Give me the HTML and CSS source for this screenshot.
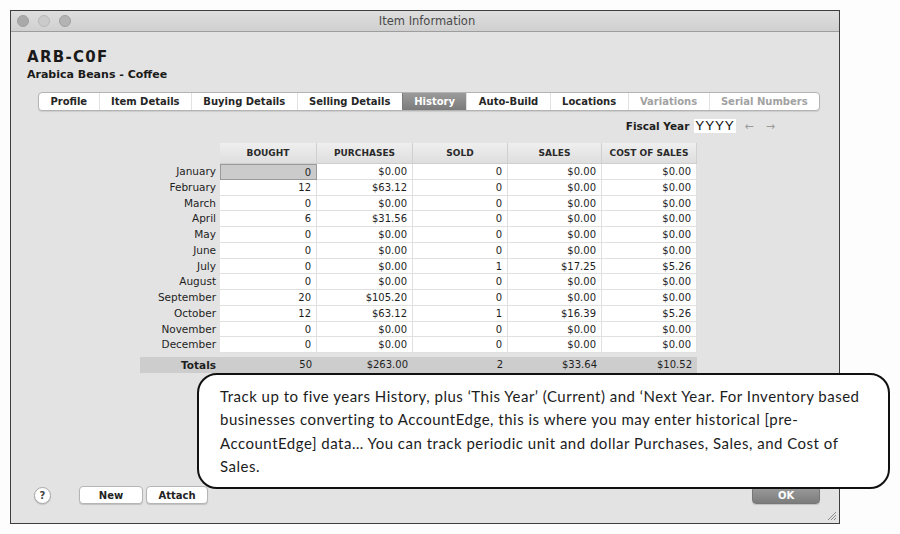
FILE: index.html
```html
<!DOCTYPE html>
<html lang="en">
<head>
<meta charset="UTF-8" />
<meta name="viewport" content="width=device-width, initial-scale=1" />
<title>Item Information</title>
<link rel="stylesheet" href="styles.css">
</head>
<body>

<div class="window">
  <div class="titlebar">
    <div class="lights">
      <span class="light l1"></span>
      <span class="light l2"></span>
      <span class="light l3"></span>
    </div>
    <div class="title">Item Information</div>
  </div>

  <div class="content">
    <h1 class="item-code">ARB-C0F</h1>
    <p class="item-name">Arabica Beans - Coffee</p>

    <nav class="tabs">
      <span class="tab">Profile</span>
      <span class="tab">Item Details</span>
      <span class="tab">Buying Details</span>
      <span class="tab">Selling Details</span>
      <span class="tab active">History</span>
      <span class="tab">Auto-Build</span>
      <span class="tab">Locations</span>
      <span class="tab disabled">Variations</span>
      <span class="tab disabled">Serial Numbers</span>
    </nav>

    <div class="fiscal">
      <span class="fiscal-label">Fiscal Year</span>
      <span class="fiscal-year">YYYY</span>
      <span class="arrows"><span>&larr;</span><span>&rarr;</span></span>
    </div>

    <div class="history">
      <div class="grid">
        <div></div>
        <div class="hd">BOUGHT</div>
        <div class="hd">PURCHASES</div>
        <div class="hd">SOLD</div>
        <div class="hd">SALES</div>
        <div class="hd">COST OF SALES</div>

        <div class="lbl">January</div><div class="cell selected">0</div><div class="cell">$0.00</div><div class="cell">0</div><div class="cell">$0.00</div><div class="cell">$0.00</div>
        <div class="lbl">February</div><div class="cell">12</div><div class="cell">$63.12</div><div class="cell">0</div><div class="cell">$0.00</div><div class="cell">$0.00</div>
        <div class="lbl">March</div><div class="cell">0</div><div class="cell">$0.00</div><div class="cell">0</div><div class="cell">$0.00</div><div class="cell">$0.00</div>
        <div class="lbl">April</div><div class="cell">6</div><div class="cell">$31.56</div><div class="cell">0</div><div class="cell">$0.00</div><div class="cell">$0.00</div>
        <div class="lbl">May</div><div class="cell">0</div><div class="cell">$0.00</div><div class="cell">0</div><div class="cell">$0.00</div><div class="cell">$0.00</div>
        <div class="lbl">June</div><div class="cell">0</div><div class="cell">$0.00</div><div class="cell">0</div><div class="cell">$0.00</div><div class="cell">$0.00</div>
        <div class="lbl">July</div><div class="cell">0</div><div class="cell">$0.00</div><div class="cell">1</div><div class="cell">$17.25</div><div class="cell">$5.26</div>
        <div class="lbl">August</div><div class="cell">0</div><div class="cell">$0.00</div><div class="cell">0</div><div class="cell">$0.00</div><div class="cell">$0.00</div>
        <div class="lbl">September</div><div class="cell">20</div><div class="cell">$105.20</div><div class="cell">0</div><div class="cell">$0.00</div><div class="cell">$0.00</div>
        <div class="lbl">October</div><div class="cell">12</div><div class="cell">$63.12</div><div class="cell">1</div><div class="cell">$16.39</div><div class="cell">$5.26</div>
        <div class="lbl">November</div><div class="cell">0</div><div class="cell">$0.00</div><div class="cell">0</div><div class="cell">$0.00</div><div class="cell">$0.00</div>
        <div class="lbl">December</div><div class="cell">0</div><div class="cell">$0.00</div><div class="cell">0</div><div class="cell">$0.00</div><div class="cell">$0.00</div>
      </div>

      <div class="totals">
        <div class="lbl">Totals</div>
        <div class="cell">50</div>
        <div class="cell">$263.00</div>
        <div class="cell">2</div>
        <div class="cell">$33.64</div>
        <div class="cell">$10.52</div>
      </div>
    </div>

    <div class="bottombar">
      <button class="help">?</button>
      <button class="btn new">New</button>
      <button class="btn">Attach</button>
      <button class="btn ok">OK</button>
    </div>
  </div>

  <svg class="grip" width="10" height="10" viewBox="0 0 10 10">
    <path d="M1 9 L9 1 M4 9 L9 4 M7 9 L9 7" stroke="#8a8a8a" stroke-width="1" fill="none" />
  </svg>
</div>

<!-- Callout -->
<div class="callout">
  Track up to five years History, plus &lsquo;This Year&rsquo; (Current) and &lsquo;Next Year. For Inventory based<br>
  businesses converting to AccountEdge, this is where you may enter historical [pre-<br>
  AccountEdge] data&hellip; You can track periodic unit and dollar Purchases, Sales, and Cost of<br>
  Sales.
</div>

</body>
</html>
```

FILE: styles.css
```css
body {
  margin: 0;
  background: #fdfdfd;
  font-family: "DejaVu Sans", sans-serif;
  color: #222;
  position: relative;
  height: 534px;
  overflow: hidden;
}

/* Window */
.window {
  position: relative;
  margin: 10px 0 0 10px;
  width: 830px;
  height: 514px;
  box-sizing: border-box;
  border: 1px solid #3e3e3e;
  background: #e3e3e3;
  display: flex;
  flex-direction: column;
}
.titlebar {
  height: 20px;
  border-bottom: 1px solid #9d9d9d;
  background: linear-gradient(#dedede, #d0d0d0);
  display: flex;
  align-items: center;
  position: relative;
}
.lights {
  display: flex;
  gap: 9px;
  padding-left: 6px;
}
.light {
  width: 10px;
  height: 10px;
  border-radius: 50%;
  border: 1px solid #a0a0a0;
}
.l1 { background: #a9a9a9; }
.l2 { background: #cbcbcb; border-color: #b8b8b8; }
.l3 { background: #b4b4b4; }
.title {
  flex: 1;
  text-align: center;
  font-size: 11.5px;
  color: #4a4a4a;
  margin-right: 56px;
}

.content {
  flex: 1;
  display: flex;
  flex-direction: column;
  padding-top: 16px;
}
.item-code {
  margin: 0 0 0 16px;
  font-size: 15px;
  line-height: 18px;
  letter-spacing: 1.3px;
  font-weight: bold;
  color: #1a1a1a;
}
.item-name {
  margin: 2px 0 0 16px;
  font-size: 11px;
  line-height: 14px;
  font-weight: bold;
  color: #1a1a1a;
}

/* Tabs */
.tabs {
  margin: 10px 19px 0 27px;
  height: 19px;
  box-sizing: border-box;
  display: flex;
  background: #fff;
  border: 1px solid #b3b3b3;
  border-radius: 4px;
  overflow: hidden;
  box-shadow: 0 1px 1px rgba(0,0,0,0.1);
}
.tab {
  flex: 1 1 auto;
  padding: 0 10px;
  text-align: center;
  font-size: 10px;
  font-weight: bold;
  line-height: 17px;
  color: #262626;
  border-left: 1px solid #e2e2e2;
  white-space: nowrap;
}
.tab:first-child { border-left: none; }
.tab.active {
  background: linear-gradient(#9b9b9b, #7b7b7b);
  color: #fff;
  border-left-color: #7b7b7b;
}
.tab.disabled { color: #a2a2a2; }

/* Fiscal year */
.fiscal {
  margin-top: 7px;
  height: 16px;
  display: flex;
  align-items: center;
  justify-content: flex-end;
  padding-right: 64px;
}
.fiscal-label {
  font-size: 10.5px;
  font-weight: bold;
  color: #1e1e1e;
}
.fiscal-year {
  margin-left: 5px;
  background: #fff;
  font-family: "Liberation Sans", Arial, sans-serif;
  font-size: 13.5px;
  letter-spacing: 0.8px;
  line-height: 14px;
  padding: 0 1px;
  color: #111;
}
.arrows {
  margin-left: 9px;
  display: flex;
  gap: 12px;
  font-size: 11px;
  color: #9a9a9a;
}

/* History table */
.history {
  margin: 9px 0 0 129px;
  width: 557px;
}
.grid, .totals {
  display: grid;
  grid-template-columns: 80px 97px 96px 95px 94px 95px;
}
.grid {
  grid-template-rows: 21px;
  grid-auto-rows: 15.75px;
}
.hd {
  background: linear-gradient(#efefef, #dedede);
  border-right: 1px solid #d0d0d0;
  border-bottom: 1px solid #cfcfcf;
  font-size: 9px;
  font-weight: bold;
  color: #2a2a2a;
  display: flex;
  align-items: center;
  justify-content: center;
}
.lbl {
  font-size: 10.5px;
  text-align: right;
  padding-right: 4px;
  line-height: 15.75px;
  color: #1e1e1e;
}
.cell {
  background: #fff;
  box-sizing: border-box;
  border-right: 1px solid #e0e0e0;
  border-bottom: 1px solid #e0e0e0;
  font-size: 10px;
  text-align: right;
  padding-right: 5px;
  line-height: 15px;
  color: #1e1e1e;
}
.cell.selected {
  background: #cbcbcb;
  border: 1px solid #9a9a9a;
}
.totals {
  margin-top: 4px;
  height: 16px;
  background: #cdcdcd;
}
.totals .lbl {
  font-weight: bold;
  line-height: 16px;
}
.totals .cell {
  background: transparent;
  border: none;
  line-height: 16px;
}

/* Bottom buttons */
.bottombar {
  margin-top: auto;
  display: flex;
  align-items: center;
  padding: 0 19px 19px 23px;
}
button {
  font-family: "DejaVu Sans", sans-serif;
  cursor: pointer;
}
.help {
  width: 17px;
  height: 17px;
  padding: 0;
  border-radius: 50%;
  border: 1px solid #a8a8a8;
  background: #fff;
  font-size: 10px;
  font-weight: bold;
  color: #444;
  box-shadow: 0 1px 1px rgba(0,0,0,0.15);
}
.btn {
  height: 18px;
  padding: 0;
  width: 62px;
  margin-left: 3px;
  border: 1px solid #b5b5b5;
  border-radius: 4px;
  background: #fff;
  font-size: 10px;
  font-weight: bold;
  color: #222;
  box-shadow: 0 1px 1px rgba(0,0,0,0.15);
}
.btn.new {
  margin-left: 28px;
  width: 64px;
}
.btn.ok {
  margin-left: auto;
  width: 68px;
  border-color: #777;
  background: linear-gradient(#9c9c9c, #7c7c7c);
  color: #fff;
}
.grip {
  position: absolute;
  right: 2px;
  bottom: 2px;
}

/* Callout bubble */
.callout {
  position: absolute;
  left: 197px;
  top: 373px;
  width: 693px;
  height: 116px;
  box-sizing: border-box;
  border: 2px solid #111;
  border-radius: 20px;
  background: #fff;
  padding: 10px 0 0 21px;
  font-family: Lato, "Open Sans", sans-serif;
  font-size: 15px;
  letter-spacing: 0.5px;
  line-height: 23.3px;
  color: #1c1c1c;
  white-space: nowrap;
}
```
